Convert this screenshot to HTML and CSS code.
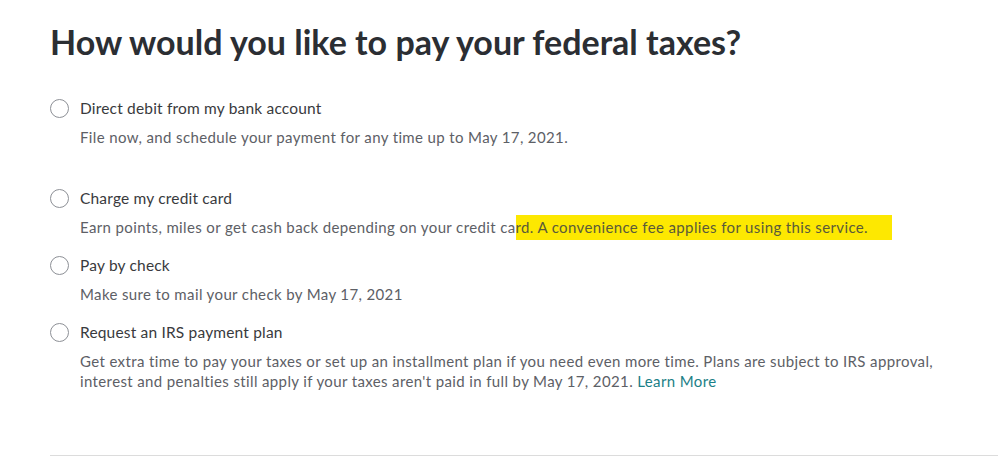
FILE: index.html
```html
<!DOCTYPE html>
<html lang="en">
<head>
<meta charset="utf-8">
<title>How would you like to pay your federal taxes?</title>
<link rel="stylesheet" href="styles.css">
</head>
<body>
<main class="page">
  <h1 class="title">How would you like to pay your federal taxes?</h1>
  <ul class="options">
    <li class="option option--spaced">
      <span class="radio"></span>
      <div class="option-text">
        <div class="label">Direct debit from my bank account</div>
        <div class="desc">File now, and schedule your payment for any time up to May 17, 2021.</div>
      </div>
    </li>
    <li class="option">
      <span class="radio"></span>
      <div class="option-text">
        <div class="label">Charge my credit card</div>
        <div class="desc">Earn points, miles or get cash back depending on your credit ca<mark class="hl">rd. A convenience fee applies for using this service.</mark></div>
      </div>
    </li>
    <li class="option">
      <span class="radio"></span>
      <div class="option-text">
        <div class="label">Pay by check</div>
        <div class="desc">Make sure to mail your check by May 17, 2021</div>
      </div>
    </li>
    <li class="option">
      <span class="radio"></span>
      <div class="option-text">
        <div class="label">Request an IRS payment plan</div>
        <div class="desc desc--wide">Get extra time to pay your taxes or set up an installment plan if you need even more time. Plans are subject to IRS approval, interest and penalties still apply if your taxes aren't paid in full by May 17, 2021. <a class="link" href="#">Learn More</a></div>
      </div>
    </li>
  </ul>
  <hr class="divider">
</main>
</body>
</html>
```
FILE: styles.css
```css
html, body {
  margin: 0;
  padding: 0;
  background: #ffffff;
}
body {
  font-family: "Lato", "Noto Sans", sans-serif;
  color: #393a3d;
}
.page {
  padding: 22px 0 0 50px;
}
.title {
  margin: 0;
  font-size: 34px;
  line-height: 40px;
  font-weight: 700;
  color: #2b2e33;
  letter-spacing: 0;
}
.options {
  list-style: none;
  margin: 35px 0 0 0;
  padding: 0;
}
.option {
  display: flex;
  gap: 11px;
  margin-bottom: 17px;
}
.option--spaced {
  margin-bottom: 40px;
}
.radio {
  flex: none;
  box-sizing: border-box;
  width: 19px;
  height: 19px;
  margin-top: 2px;
  border: 1px solid #8d9096;
  border-radius: 50%;
}
.label {
  font-size: 15.5px;
  line-height: 22px;
  letter-spacing: 0.18px;
  color: #393a3d;
}
.desc {
  margin-top: 8px;
  font-size: 15px;
  line-height: 20px;
  letter-spacing: 0.37px;
  color: #5d6066;
}
.desc--wide {
  width: 870px;
}
.hl {
  background: #fde801;
  color: #5a5a3a;
  padding: 3px 24px 4px 0;
}
.link {
  color: #1b8087;
  text-decoration: none;
}
.divider {
  margin: 64px 0 0 0;
  border: 0;
  border-top: 1px solid #dcdcdc;
}
```
